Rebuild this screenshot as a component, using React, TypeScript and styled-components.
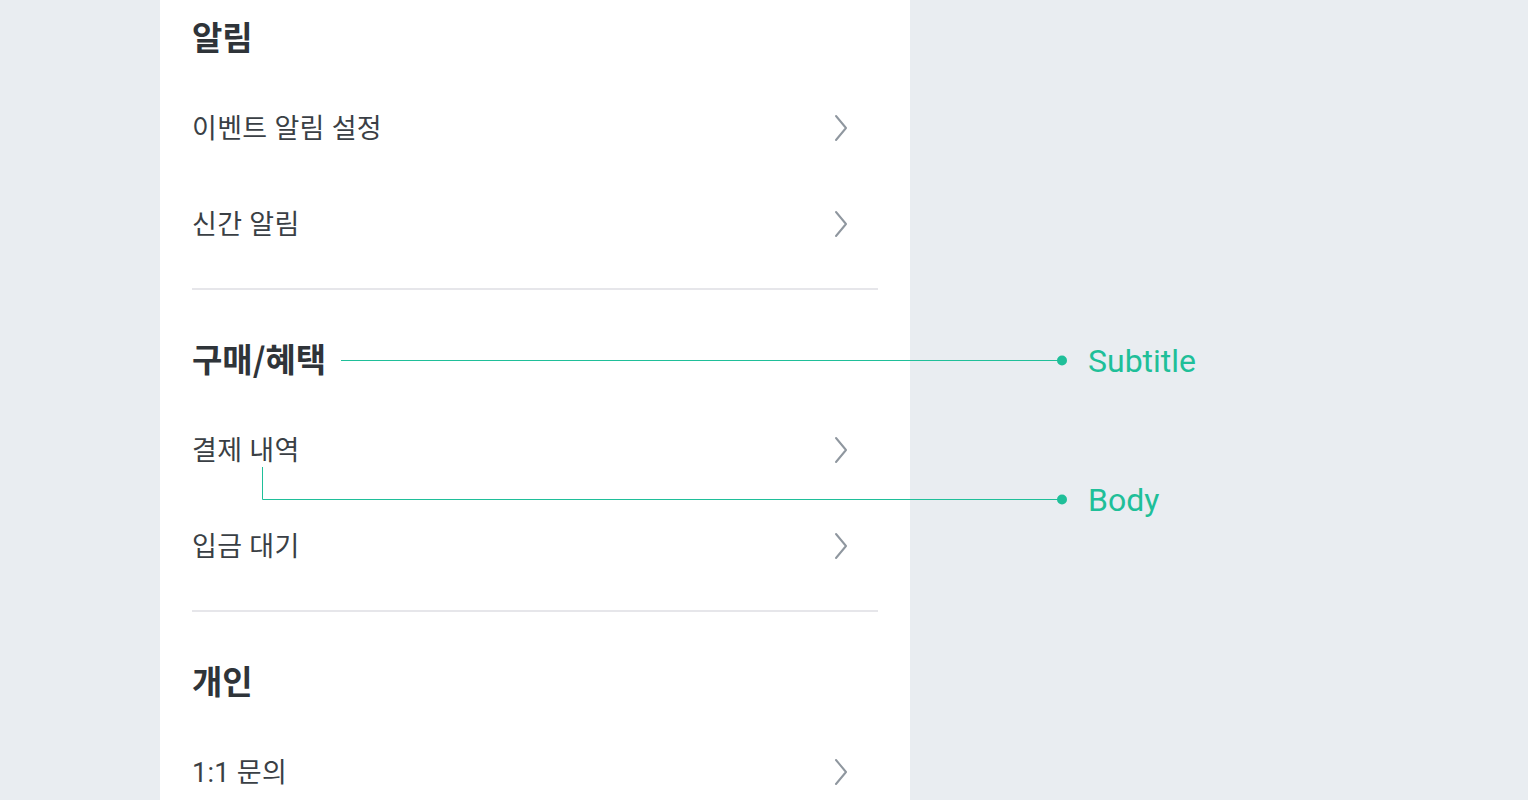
import React from "react";
import styled, { createGlobalStyle } from "styled-components";

const GlobalStyle = createGlobalStyle`
  html, body { margin: 0; padding: 0; background: #e9edf1; }
  body { font-family: "Noto Sans CJK KR", "Noto Sans", sans-serif; }
  * { box-sizing: border-box; }
`;

const Page = styled.div`
  position: relative;
  width: 1528px;
  height: 800px;
  overflow: hidden;
  background: #e9edf1;
`;

const Panel = styled.div`
  width: 750px;
  height: 100%;
  margin-left: 160px;
  background: #ffffff;
  padding: 0 32px;
  display: flex;
  flex-direction: column;
`;

const Section = styled.section<{ $first?: boolean }>`
  display: flex;
  flex-direction: column;
  padding-top: ${(p) => (p.$first ? "0px" : "30px")};
  padding-bottom: 18px;
  margin-top: ${(p) => (p.$first ? "-2px" : "0")};
`;

const Divider = styled.hr`
  margin: 0;
  border: none;
  height: 2px;
  flex-shrink: 0;
  background: #e6e6ea;
`;

const Title = styled.h2`
  margin: 0;
  height: 80px;
  padding-bottom: 4px;
  display: flex;
  align-items: center;
  font-size: 33px;
  font-weight: 700;
  color: #2f3439;
`;

const Row = styled.div`
  height: 96px;
  display: flex;
  align-items: center;
  justify-content: space-between;
  padding-right: 30px;
`;

const Label = styled.span`
  font-family: Roboto, "Noto Sans CJK KR", sans-serif;
  font-size: 27px;
  font-weight: 400;
  color: #3a3f45;
  letter-spacing: 0.3px;
`;

const ChevronIcon = styled.svg`
  margin-top: 3px;
  flex-shrink: 0;
`;

const Chevron = () => (
  <ChevronIcon width="14" height="28" viewBox="0 0 14 28" fill="none">
    <polyline
      points="2,2 12,14 2,26"
      stroke="#8f979f"
      strokeWidth="2"
      strokeLinecap="round"
      strokeLinejoin="round"
    />
  </ChevronIcon>
);

const Overlay = styled.svg`
  position: absolute;
  left: 0;
  top: 0;
  pointer-events: none;
`;

const Note = styled.span<{ $top: number }>`
  position: absolute;
  left: 1088px;
  top: ${(p) => p.$top}px;
  transform: translateY(-50%);
  font-family: Roboto, "Noto Sans", sans-serif;
  font-size: 32px;
  color: #1fbf99;
  line-height: 1;
`;

const sections = [
  { title: "알림", items: ["이벤트 알림 설정", "신간 알림"] },
  { title: "구매/혜택", items: ["결제 내역", "입금 대기"] },
  { title: "개인", items: ["1:1 문의"] },
];

export default function App() {
  return (
    <Page>
      <GlobalStyle />
      <Panel>
        {sections.map((s, i) => (
          <React.Fragment key={s.title}>
            {i > 0 && <Divider />}
            <Section $first={i === 0}>
              <Title>{s.title}</Title>
              {s.items.map((it) => (
                <Row key={it}>
                  <Label>{it}</Label>
                  <Chevron />
                </Row>
              ))}
            </Section>
          </React.Fragment>
        ))}
      </Panel>
      <Overlay width="1528" height="800">
        <line x1="341" y1="360.5" x2="1062" y2="360.5" stroke="#1fbf99" strokeWidth="1" />
        <circle cx="1062" cy="360.5" r="5" fill="#1fbf99" />
        <polyline
          points="262.5,467 262.5,499.5 1062,499.5"
          fill="none"
          stroke="#1fbf99"
          strokeWidth="1"
        />
        <circle cx="1062" cy="499.5" r="5" fill="#1fbf99" />
      </Overlay>
      <Note $top={361}>Subtitle</Note>
      <Note $top={500}>Body</Note>
    </Page>
  );
}
